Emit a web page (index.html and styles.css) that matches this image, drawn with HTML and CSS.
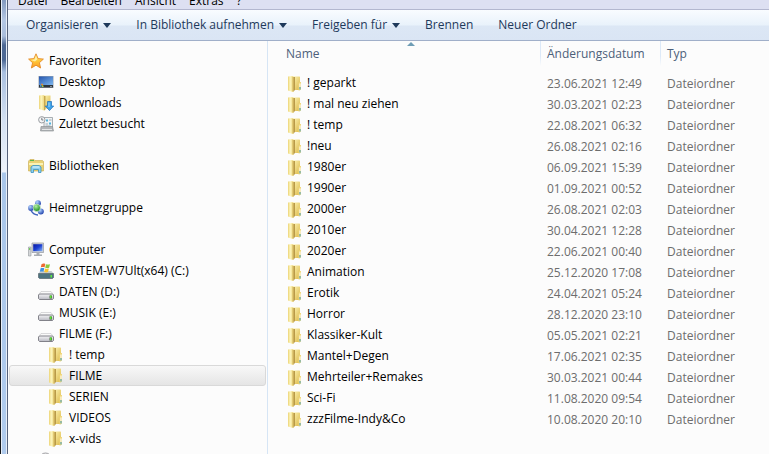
FILE: index.html
```html
<!DOCTYPE html>
<html lang="de">
<head>
    <meta charset="UTF-8">
    <title>FILME</title>
    <link rel="stylesheet" href="styles.css">
</head>
<body>
    <svg class="sprite" aria-hidden="true">
        <defs>
            <linearGradient id="gFolder" x1="0" y1="0" x2="1" y2="0">
                <stop offset="0" stop-color="#ecd375"/>
                <stop offset="0.4" stop-color="#fdf6bd"/>
                <stop offset="1" stop-color="#ecd47a"/>
            </linearGradient>
            <linearGradient id="gFolder2" x1="0" y1="0" x2="1" y2="1">
                <stop offset="0" stop-color="#fdf3b0"/>
                <stop offset="1" stop-color="#dcb94c"/>
            </linearGradient>
            <linearGradient id="gStar" x1="0" y1="0" x2="0" y2="1">
                <stop offset="0" stop-color="#fff59a"/>
                <stop offset="0.5" stop-color="#ffc83a"/>
                <stop offset="1" stop-color="#fb9a24"/>
            </linearGradient>
            <linearGradient id="gScreen" x1="0" y1="0" x2="1" y2="1">
                <stop offset="0" stop-color="#2455ae"/>
                <stop offset="1" stop-color="#7db6ee"/>
            </linearGradient>
            <linearGradient id="gMonitor" x1="0" y1="0" x2="1" y2="1">
                <stop offset="0" stop-color="#0818a0"/>
                <stop offset="0.5" stop-color="#1c3fd2"/>
                <stop offset="1" stop-color="#86b4f5"/>
            </linearGradient>
            <linearGradient id="gDrive" x1="0" y1="0" x2="0" y2="1">
                <stop offset="0" stop-color="#f4f4f6"/>
                <stop offset="1" stop-color="#b9b9c2"/>
            </linearGradient>
            <radialGradient id="gBlue" cx="0.35" cy="0.3" r="0.7">
                <stop offset="0" stop-color="#b4d6ff"/>
                <stop offset="1" stop-color="#2648b0"/>
            </radialGradient>
            <radialGradient id="gGreen" cx="0.4" cy="0.3" r="0.7">
                <stop offset="0" stop-color="#b4f3a0"/>
                <stop offset="1" stop-color="#13871c"/>
            </radialGradient>
        </defs>
        <symbol id="folder" viewBox="0 0 16 16">
            <path d="M6 .5h6.500l.5.5v13H6z" fill="url(#gFolder2)"/>
            <path d="M1 .500 5.500 0 6.500.700V16L5 15.700 1 14.500z" fill="url(#gFolder)"/>
            <path d="M5.500 1h1v14.500h-1z" fill="#d2b35a"/>
            <path d="M6.500 1H8v13l-1.500 1.500z" fill="#b99a48"/>
            <path d="M11.500 7l1-1H14v7.500l-1.500 1h-1z" fill="#f0d77c"/>
            <path d="M12.500 7.500h1V11h-1z" fill="#fff"/>
            <path d="M12.500 11h1v2.500h-1z" fill="#3f9fc8"/>
        </symbol>
        <symbol id="star" viewBox="0 0 16 16">
            <path d="M8 .8l2.1 4.8 5.3.5-4 3.6 1.2 5.3L8 12.2 3.4 15l1.2-5.3-4-3.6 5.3-.5z" fill="url(#gStar)" stroke="#e58a27" stroke-width=".9" stroke-linejoin="round"/>
            <path d="M8 3l1.2 3.6L7 8.4 3 7l3.6-.4z" fill="#fffbc4" opacity=".75"/>
        </symbol>
        <symbol id="desktop" viewBox="0 0 16 16">
            <path d="M.5 2h15v12H.5z" fill="#9aa2ad"/>
            <path d="M1 2.5h14V11H1z" fill="url(#gScreen)"/>
            <path d="M1 11h14v2.5H1z" fill="#2e353c"/>
            <path d="M3.5 9.5l1.5.5v1.5H3z" fill="#f28b2c"/>
            <path d="M2 11l1.5.5V13L2 12.5z" fill="#4bb0f2"/>
            <path d="M4 11.5h1.5V13H4z" fill="#a5d648"/>
            <path d="M12 12h2v1h-2z" fill="#8a9298"/>
        </symbol>
        <symbol id="downloads" viewBox="0 0 16 16">
            <path d="M6 .5h6.500v13H6z" fill="url(#gFolder2)"/>
            <path d="M1 .500 5.500 0 6.500.700V15.500L5 15.200 1 14z" fill="url(#gFolder)"/>
            <path d="M6 1h1.500v13.500L6 15.500z" fill="#c7a950"/>
            <path d="M9.500 6.500h4V11h2.200l-4.200 4.600L7.300 11h2.200z" fill="#3fa4ea" stroke="#1d6fb8" stroke-width=".7"/>
            <path d="M10.500 7.500h1V12h-1z" fill="#a5dcfb"/>
        </symbol>
        <symbol id="recent" viewBox="0 0 16 16">
            <path d="M6 1.500h8.500v10H6z" fill="#f0f3f5" stroke="#949b9f" stroke-width=".8"/>
            <path d="M8 3.500h2v2H8zM11 6.500h2v2h-2z" fill="#4cb3df"/>
            <path d="M11 4h2.500M7.500 8H10M7.500 10h5" stroke="#9eadb5" fill="none"/>
            <path d="M3 10.500h11.500l1 4.500h-13z" fill="#b2b5b8" stroke="#85898d" stroke-width=".6"/>
            <path d="M4 13.500h10" stroke="#e3e5e6"/>
            <circle cx="3.800" cy="3.800" r="3.200" fill="#f5f6f7" stroke="#8e9499" stroke-width=".9"/>
            <path d="M3.800 1.800v2.200h1.600" fill="none" stroke="#5a6066" stroke-width=".8"/>
        </symbol>
        <symbol id="libraries" viewBox="0 0 16 16">
            <path d="M1 2.500l1-1h4l1 1h7.500l1 1V13H.500V3.500z" fill="#e9d274" stroke="#c7a94c" stroke-width=".6"/>
            <path d="M2 2.500h4" stroke="#5eb84c"/>
            <path d="M1 5h14v2H1z" fill="#fbf2b5"/>
            <path d="M3 14.500V9l2-1.500h6L13 9v5.500h-2.500v-3h-5v3z" fill="#8ed0ee" stroke="#3a93c2" stroke-width=".8"/>
            <path d="M4.500 9h7" stroke="#e0f6ff"/>
        </symbol>
        <symbol id="homegroup" viewBox="0 0 16 16">
            <circle cx="10" cy="3.200" r="2.900" fill="url(#gBlue)"/>
            <circle cx="3" cy="8" r="2.900" fill="url(#gBlue)"/>
            <circle cx="12.800" cy="11.500" r="3" fill="url(#gBlue)"/>
            <path d="M3 10.500c2 3.500 4 4.500 7 4.500" fill="none" stroke="#3f63bd" stroke-width="1.500"/>
            <circle cx="8.700" cy="7.800" r="3.700" fill="url(#gGreen)" stroke="#e6f4ea" stroke-width=".6"/>
        </symbol>
        <symbol id="computer" viewBox="0 0 16 16">
            <path d="M.500 5h2.500v9H.500z" fill="#d5d7d9" stroke="#92979b" stroke-width=".6"/>
            <path d="M1.200 6h1v2h-1z" fill="#58c83c"/>
            <path d="M4 1h11.600v9.500H4z" fill="#cfd3d9" stroke="#92979f" stroke-width=".7"/>
            <path d="M5.200 2.200h9.200v7H5.200z" fill="url(#gMonitor)"/>
            <path d="M8.500 11h3v1.500H14v1.500H6v-1.500h2.500z" fill="#a9adb2"/>
        </symbol>
        <symbol id="system" viewBox="0 0 16 16">
            <path d="M2.500 8h11l2 2.500H.500z" fill="#c4ccd0"/>
            <path d="M.500 10.500h15v4l-1 1h-13l-1-1z" fill="#4d7480" stroke="#4b5960" stroke-width=".6"/>
            <path d="M12.500 12h1.500v2.500h-1.500z" fill="#5ef03c"/>
            <path d="M3.500 1.200C5 .300 6 .500 7.300 1L6.500 4.500c-1.300-.600-2.400-.500-3.700 0z" fill="#ee6a32"/>
            <path d="M8 1.200c1.300.600 2.500.500 4 0l-.900 3.600c-1.400.600-2.500.500-3.900-.100z" fill="#8cc93d"/>
            <path d="M2.600 5.300c1.300-.500 2.400-.500 3.700 0L5.500 8.800c-1.300-.500-2.400-.500-3.700 0z" fill="#3f93e2"/>
            <path d="M7 5.500c1.300.600 2.500.500 3.900 0L10 9c-1.300.500-2.500.500-3.800 0z" fill="#fbc531"/>
        </symbol>
        <symbol id="drive" viewBox="0 0 16 16">
            <path d="M3 7.500h10l2.300 3.200H.700z" fill="#fafafa" stroke="#c2c2c6" stroke-width=".6"/>
            <path d="M1.500 10h13l1 1v3.500l-1 1h-13l-1-1V11z" fill="url(#gDrive)" stroke="#77777f" stroke-width=".9"/>
            <path d="M11.500 11.500H14v3h-2.500z" fill="#3e6a35"/>
            <path d="M12 11.500h1.500V14H12z" fill="#5be632"/>
        </symbol>
        <symbol id="disc" viewBox="0 0 16 16">
            <circle cx="7.500" cy="7" r="6" fill="#e4e4e6" stroke="#a2a2a6"/>
            <circle cx="7.500" cy="7" r="1.800" fill="#fff" stroke="#a2a2a6"/>
        </symbol>
    </svg>

    <div class="frame"></div>
    <div class="window">
        <div class="menubar">
            <button>Datei</button>
            <button>Bearbeiten</button>
            <button>Ansicht</button>
            <button>Extras</button>
            <button>?</button>
        </div>

        <div class="toolbar">
            <button class="dropdown">Organisieren</button>
            <button class="dropdown">In Bibliothek aufnehmen</button>
            <button class="dropdown">Freigeben für</button>
            <button>Brennen</button>
            <button>Neuer Ordner</button>
        </div>

        <div class="content">
            <nav class="tree">
                <ul>
                    <li><a href="#"><svg class="icon"><use href="#star"/></svg>Favoriten</a></li>
                    <li><a href="#" class="level2"><svg class="icon"><use href="#desktop"/></svg>Desktop</a></li>
                    <li><a href="#" class="level2"><svg class="icon"><use href="#downloads"/></svg>Downloads</a></li>
                    <li><a href="#" class="level2"><svg class="icon"><use href="#recent"/></svg>Zuletzt besucht</a></li>
                </ul>
                <ul>
                    <li><a href="#"><svg class="icon"><use href="#libraries"/></svg>Bibliotheken</a></li>
                </ul>
                <ul>
                    <li><a href="#"><svg class="icon"><use href="#homegroup"/></svg>Heimnetzgruppe</a></li>
                </ul>
                <ul>
                    <li><a href="#"><svg class="icon"><use href="#computer"/></svg>Computer</a></li>
                    <li><a href="#" class="level2"><svg class="icon"><use href="#system"/></svg>SYSTEM-W7Ult(x64) (C:)</a></li>
                    <li><a href="#" class="level2"><svg class="icon"><use href="#drive"/></svg>DATEN (D:)</a></li>
                    <li><a href="#" class="level2"><svg class="icon"><use href="#drive"/></svg>MUSIK (E:)</a></li>
                    <li><a href="#" class="level2"><svg class="icon"><use href="#drive"/></svg>FILME (F:)</a></li>
                    <li><a href="#" class="level3"><svg class="icon"><use href="#folder"/></svg>! temp</a></li>
                    <li><a href="#" class="level3 selected"><svg class="icon"><use href="#folder"/></svg>FILME</a></li>
                    <li><a href="#" class="level3"><svg class="icon"><use href="#folder"/></svg>SERIEN</a></li>
                    <li><a href="#" class="level3"><svg class="icon"><use href="#folder"/></svg>VIDEOS</a></li>
                    <li><a href="#" class="level3"><svg class="icon"><use href="#folder"/></svg>x-vids</a></li>
                    <li><a href="#" class="level2"><svg class="icon"><use href="#disc"/></svg></a></li>
                </ul>
            </nav>

            <main class="files">
                <table>
                    <thead>
                        <tr>
                            <th class="name sorted">Name</th>
                            <th class="date">Änderungsdatum</th>
                            <th class="type">Typ</th>
                        </tr>
                    </thead>
                    <tbody>
                        <tr><td><svg class="icon"><use href="#folder"/></svg>! geparkt</td><td>23.06.2021 12:49</td><td>Dateiordner</td></tr>
                        <tr><td><svg class="icon"><use href="#folder"/></svg>! mal neu ziehen</td><td>30.03.2021 02:23</td><td>Dateiordner</td></tr>
                        <tr><td><svg class="icon"><use href="#folder"/></svg>! temp</td><td>22.08.2021 06:32</td><td>Dateiordner</td></tr>
                        <tr><td><svg class="icon"><use href="#folder"/></svg>!neu</td><td>26.08.2021 02:16</td><td>Dateiordner</td></tr>
                        <tr><td><svg class="icon"><use href="#folder"/></svg>1980er</td><td>06.09.2021 15:39</td><td>Dateiordner</td></tr>
                        <tr><td><svg class="icon"><use href="#folder"/></svg>1990er</td><td>01.09.2021 00:52</td><td>Dateiordner</td></tr>
                        <tr><td><svg class="icon"><use href="#folder"/></svg>2000er</td><td>26.08.2021 02:03</td><td>Dateiordner</td></tr>
                        <tr><td><svg class="icon"><use href="#folder"/></svg>2010er</td><td>30.04.2021 12:28</td><td>Dateiordner</td></tr>
                        <tr><td><svg class="icon"><use href="#folder"/></svg>2020er</td><td>22.06.2021 00:40</td><td>Dateiordner</td></tr>
                        <tr><td><svg class="icon"><use href="#folder"/></svg>Animation</td><td>25.12.2020 17:08</td><td>Dateiordner</td></tr>
                        <tr><td><svg class="icon"><use href="#folder"/></svg>Erotik</td><td>24.04.2021 05:24</td><td>Dateiordner</td></tr>
                        <tr><td><svg class="icon"><use href="#folder"/></svg>Horror</td><td>28.12.2020 23:10</td><td>Dateiordner</td></tr>
                        <tr><td><svg class="icon"><use href="#folder"/></svg>Klassiker-Kult</td><td>05.05.2021 02:21</td><td>Dateiordner</td></tr>
                        <tr><td><svg class="icon"><use href="#folder"/></svg>Mantel+Degen</td><td>17.06.2021 02:35</td><td>Dateiordner</td></tr>
                        <tr><td><svg class="icon"><use href="#folder"/></svg>Mehrteiler+Remakes</td><td>30.03.2021 00:44</td><td>Dateiordner</td></tr>
                        <tr><td><svg class="icon"><use href="#folder"/></svg>Sci-Fi</td><td>11.08.2020 09:54</td><td>Dateiordner</td></tr>
                        <tr><td><svg class="icon"><use href="#folder"/></svg>zzzFilme-Indy&amp;Co</td><td>10.08.2020 20:10</td><td>Dateiordner</td></tr>
                    </tbody>
                </table>
            </main>
        </div>
    </div>
</body>
</html>
```
FILE: styles.css
```css
* { box-sizing: border-box; }
body { margin: 0; height: 100vh; display: flex; overflow: hidden; background: #fcfcfc; font-family: "Open Sans", "Noto Sans", sans-serif; font-size: 12px; line-height: 16px; color: #000; }
button { margin: 0; padding: 0; border: 0; background: none; font: inherit; color: inherit; white-space: nowrap; }
.sprite { position: absolute; width: 0; height: 0; }
.icon { width: 16px; height: 16px; flex: none; }

/* left window border */
.frame { flex: 0 0 8px; border-left: 1px solid #15171c; border-right: 1px solid #55617a; background: linear-gradient(#8299bf 0, #b4c7e3 20px, #a9bddc 36px, #4d6894 45px, #4d6894 60px, #a9bfdf 72px, #d3e0f2 120px, #eef3fa 172px, #a9c6ea 173px, #b0cbed 100%); box-shadow: inset 1px 0 #e8eff8, inset -1px 0 #e8eff8; }
.window { flex: 1; min-width: 0; display: flex; flex-direction: column; }

.menubar { flex: 0 0 9px; display: flex; align-items: flex-end; gap: 13px; padding: 0 10px; overflow: hidden; background: #dde0f2; }
.toolbar { flex: 0 0 32px; display: flex; align-items: center; gap: 25px; padding: 0 18px; color: #1e395b; background: linear-gradient(#f9fcff, #e9f2fb 15px, #dce7f5 16px, #dae5f4); border-top: 1px solid #b3b7cf; border-bottom: 1px solid #a0afc9; }
.dropdown { display: flex; align-items: center; gap: 5px; }
.dropdown::after { content: ""; border: 4px solid transparent; border-top: 5px solid #1e395b; border-bottom: 0; }

.content { flex: 1; min-height: 0; display: flex; }

.tree { flex: 0 0 260px; padding: 9px 1px 0; overflow: hidden; border-right: 1px solid #d6e5f5; }
.tree ul { list-style: none; margin: 0 0 21px; padding: 0; }
.tree a { display: flex; align-items: center; gap: 5px; height: 21px; padding-left: 18px; border: 1px solid transparent; border-radius: 3px; color: #000; text-decoration: none; white-space: nowrap; }
.tree .level2 { padding-left: 28px; }
.tree .level3 { padding-left: 38px; }
.tree .selected { border-color: #d9d9d9; background: linear-gradient(#f8f8f8, #e5e5e5); }

.files { flex: 1; min-width: 0; overflow: hidden; }
table { width: 100%; table-layout: fixed; border-collapse: collapse; }
th, td { padding: 0 0 0 6px; text-align: left; font-weight: normal; white-space: nowrap; }
th { height: 25px; color: #4c607a; background: linear-gradient(#dce9f8 60%, #fcfcfc) right / 1px 100% no-repeat; }
th:first-child { padding-left: 18px; }
.name { position: relative; width: 273px; }
.date { width: 120px; }
th.type { background: none; }
.sorted::before { content: ""; position: absolute; top: 1px; left: 51%; border: 4px solid transparent; border-top: 0; border-bottom-color: #6f9db5; }
tbody::before { content: ""; display: block; height: 7px; }
td { height: 21px; color: #6d6d6d; }
td:first-child { padding-left: 19px; color: #000; }
td .icon { margin-right: 4px; vertical-align: middle; }
```
